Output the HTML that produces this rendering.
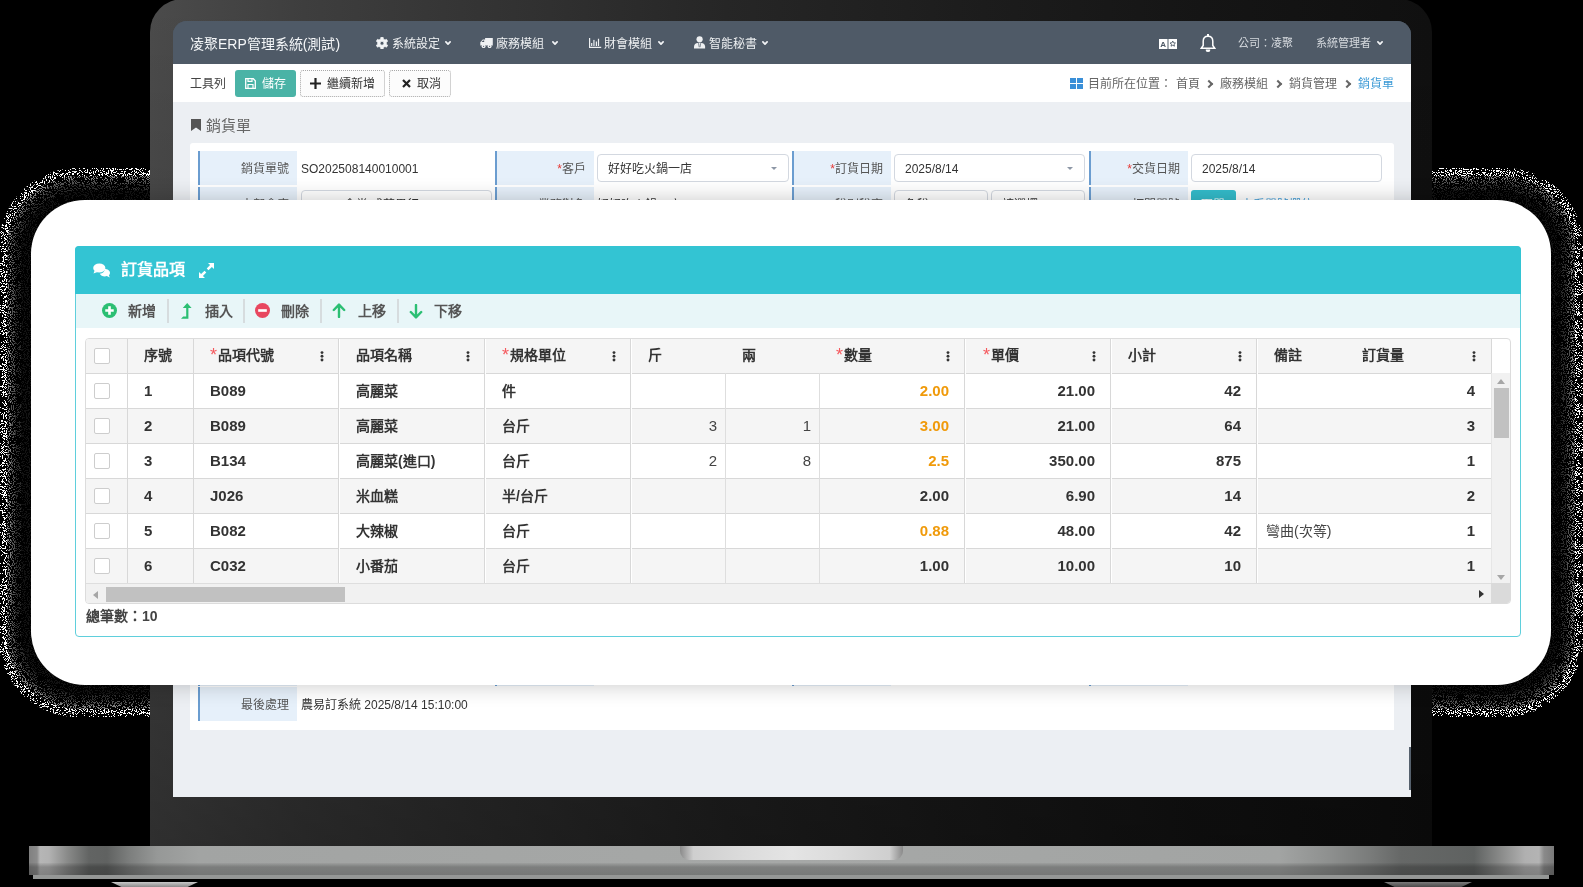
<!DOCTYPE html>
<html lang="zh-TW">
<head>
<meta charset="utf-8">
<style>
*{box-sizing:border-box;margin:0;padding:0}
html,body{width:1583px;height:887px;overflow:hidden;background:#000}
body{position:relative;font-family:"Liberation Sans",sans-serif;color:#333}
.abs{position:absolute}
#bezel{position:absolute;left:150px;top:-1px;width:1282px;height:847px;border-radius:33px 33px 0 0;
  background:linear-gradient(180deg,rgba(0,0,0,0) 0%,rgba(0,0,0,.12) 40%,rgba(0,0,0,.38) 100%),linear-gradient(90deg,#4b4b4b 0%,#3e3e3e 12%,#333 27%,#262626 45%,#1c1c1c 65%,#151515 82%,#101010 100%)}
#base{position:absolute;left:29px;top:846px;width:1525px;height:29px;
  background:linear-gradient(90deg,#808080 0px,#8c8c8c 8px,#b6b6b6 11px,#b2b2b2 20px,#8a8b8a 38px,#626463 60px,#606261 78px,#7c7e7d 100px,#969897 128px,#a2a4a3 170px,#a6a8a7 760px,#a2a4a3 1250px,#8e908f 1300px,#7a7c7b 1340px,#666867 1372px,#5f6261 1445px,#8a8b8a 1472px,#b0b0b0 1496px,#b4b4b4 1510px,#8a8a8a 1515px,#7a7a7a 1525px)}
#base .band{position:absolute;left:0;right:0;top:17px;height:12px;background:linear-gradient(180deg,rgba(0,0,0,.04) 0,rgba(0,0,0,.24) 4px,rgba(0,0,0,.28) 100%)}
#strip{position:absolute;left:33px;top:875px;width:1516px;height:4px;background:#959796}
#notch{position:absolute;left:680px;top:846px;width:223px;height:14px;border-radius:0 0 9px 9px;
  background:linear-gradient(90deg,#8a8a8a 0,#cfcfcf 6%,#dcdcdc 30%,#e4e4e4 50%,#dcdcdc 70%,#cfcfcf 94%,#8a8a8a 100%)}
.foot{position:absolute;top:882px;height:5px;background:linear-gradient(180deg,#c9c9c9,#8a8a8a);clip-path:polygon(0 0,100% 0,88% 100%,12% 100%)}
#screen{position:absolute;left:173px;top:21px;width:1238px;height:776px;border-radius:14px 14px 0 0;overflow:hidden;background:linear-gradient(#4f5a67 0,#4f5a67 43px,#eceff3 43px);will-change:transform}
#nav{position:absolute;left:0;top:0;width:100%;height:43px;background:#4e5966;color:#fff}
#tool{position:absolute;left:0;top:43px;width:100%;height:38px;background:#fff}
#card{position:absolute;left:31px;top:200px;width:1520px;height:485px;border-radius:54px;background:#fff;box-shadow:0 0 22px rgba(0,0,0,.22);will-change:transform}

.t{position:absolute;white-space:nowrap;line-height:1}
.nv{top:38px;font-size:12px;color:#eef0f2}
.nv2{top:38px;font-size:11px;color:#d5d9de}
.chev{position:absolute;top:39px;width:4.5px;height:4.5px;border-right:1.9px solid #f2f4f6;border-bottom:1.9px solid #f2f4f6;transform:rotate(45deg)}
.bc{top:78px;font-size:12px;color:#666}
.bchev{position:absolute;top:81px;width:6px;height:6px;border-right:2px solid #666;border-top:2px solid #666;transform:rotate(45deg)}

.lb{position:absolute;width:99px;background:#e6f0fa;border-left:2px solid #6b9dd0}
.lt{font-size:12px;color:#555}
.vt{font-size:12px;color:#333}
.ib{position:absolute;border:1px solid #d3d8e0;border-radius:4px;background:#fff}
.caret{position:absolute;width:0;height:0;border-left:3px solid transparent;border-right:3px solid transparent;border-top:3.5px solid #8d97a6}

.tb{top:304px;font-size:14px;font-weight:bold;color:#555}
.sep{position:absolute;top:299px;width:1.5px;height:24px;background:#d6dcde}
.tt{font-size:14px;font-weight:bold;color:#333}
.td{font-size:15px;font-weight:bold;color:#333}
.tn{font-size:15px;color:#444}
.tnc{font-size:14px;color:#444}
.req{color:#f55a5f;font-weight:normal;margin-right:0.5px;font-size:18px;line-height:0;position:relative;top:1px}
.cb{position:absolute;width:16px;height:16px;border:1px solid #cdcdcd;border-radius:2px;background:#fff}
.kb{position:absolute;width:4px;height:11px;background:radial-gradient(circle at 2px 1.7px,#333 1.45px,transparent 1.75px) 0 0/4px 3.7px repeat-y}
.tri-up{width:0;height:0;border-left:4.5px solid transparent;border-right:4.5px solid transparent;border-bottom:5px solid #a6a6a6}
.tri-dn{width:0;height:0;border-left:4.5px solid transparent;border-right:4.5px solid transparent;border-top:5px solid #a6a6a6}
.tri-l{width:0;height:0;border-top:4px solid transparent;border-bottom:4px solid transparent;border-right:5px solid #a6a6a6}
.tri-r{width:0;height:0;border-top:4.5px solid transparent;border-bottom:4.5px solid transparent;border-left:5px solid #333}
</style>
</head>
<body>
<svg class="abs" style="left:0;top:0" width="1583" height="887"><defs><filter id="n0" x="0" y="0" width="1583" height="887" filterUnits="userSpaceOnUse"><feTurbulence type="fractalNoise" baseFrequency="0.95" numOctaves="2" seed="5" result="t"/><feColorMatrix in="t" type="matrix" values="0 0 0 0 1 0 0 0 0 1 0 0 0 0 1 1 0 0 0 0" result="a"/><feComponentTransfer in="a" result="b"><feFuncA type="discrete" tableValues="0 0 0 0 0 0 0 0 0 0 0 0 1 1 1 1 1 1 1 1"/></feComponentTransfer><feComposite in="b" in2="SourceGraphic" operator="in"/></filter><filter id="n1" x="0" y="0" width="1583" height="887" filterUnits="userSpaceOnUse"><feTurbulence type="fractalNoise" baseFrequency="0.95" numOctaves="2" seed="3" result="t"/><feColorMatrix in="t" type="matrix" values="0 0 0 0 1 0 0 0 0 1 0 0 0 0 1 1 0 0 0 0" result="a"/><feComponentTransfer in="a" result="b"><feFuncA type="discrete" tableValues="0 0 0 0 0 0 0 0 0 0 0 1 1 1 1 1 1 1 1 1"/></feComponentTransfer><feComposite in="b" in2="SourceGraphic" operator="in"/></filter><filter id="n2" x="0" y="0" width="1583" height="887" filterUnits="userSpaceOnUse"><feTurbulence type="fractalNoise" baseFrequency="0.95" numOctaves="2" seed="7" result="t"/><feColorMatrix in="t" type="matrix" values="0 0 0 0 1 0 0 0 0 1 0 0 0 0 1 1 0 0 0 0" result="a"/><feComponentTransfer in="a" result="b"><feFuncA type="discrete" tableValues="0 0 0 0 0 0 0 0 0 0 0 1 1 1 1 1 1 1 1 1"/></feComponentTransfer><feComposite in="b" in2="SourceGraphic" operator="in"/></filter><filter id="n3" x="0" y="0" width="1583" height="887" filterUnits="userSpaceOnUse"><feTurbulence type="fractalNoise" baseFrequency="0.95" numOctaves="2" seed="9" result="t"/><feColorMatrix in="t" type="matrix" values="0 0 0 0 1 0 0 0 0 1 0 0 0 0 1 1 0 0 0 0" result="a"/><feComponentTransfer in="a" result="b"><feFuncA type="discrete" tableValues="0 0 0 0 0 0 0 0 0 0 0 1 1 1 1 1 1 1 1 1"/></feComponentTransfer><feComposite in="b" in2="SourceGraphic" operator="in"/></filter><filter id="n4" x="0" y="0" width="1583" height="887" filterUnits="userSpaceOnUse"><feTurbulence type="fractalNoise" baseFrequency="0.95" numOctaves="2" seed="11" result="t"/><feColorMatrix in="t" type="matrix" values="0 0 0 0 1 0 0 0 0 1 0 0 0 0 1 1 0 0 0 0" result="a"/><feComponentTransfer in="a" result="b"><feFuncA type="discrete" tableValues="0 0 0 0 0 0 0 0 0 0 0 1 1 1 1 1 1 1 1 1"/></feComponentTransfer><feComposite in="b" in2="SourceGraphic" operator="in"/></filter><filter id="n5" x="0" y="0" width="1583" height="887" filterUnits="userSpaceOnUse"><feTurbulence type="fractalNoise" baseFrequency="0.95" numOctaves="2" seed="13" result="t"/><feColorMatrix in="t" type="matrix" values="0 0 0 0 1 0 0 0 0 1 0 0 0 0 1 1 0 0 0 0" result="a"/><feComponentTransfer in="a" result="b"><feFuncA type="discrete" tableValues="0 0 0 0 0 0 0 0 0 0 0 1 1 1 1 1 1 1 1 1"/></feComponentTransfer><feComposite in="b" in2="SourceGraphic" operator="in"/></filter></defs><path d="M77.0,168H1505.0A78.0,78.0 0 0 1 1583,246.0V639.0A78.0,78.0 0 0 1 1505.0,717H77.0A78.0,78.0 0 0 1 -1,639.0V246.0A78.0,78.0 0 0 1 77.0,168ZM77.75,171H1504.25A75.75,75.75 0 0 1 1580,246.75V638.25A75.75,75.75 0 0 1 1504.25,714H77.75A75.75,75.75 0 0 1 2,638.25V246.75A75.75,75.75 0 0 1 77.75,171Z" fill-rule="evenodd" fill="#fff" fill-opacity="1.0" filter="url(#n0)"/><path d="M77.75,171H1504.25A75.75,75.75 0 0 1 1580,246.75V638.25A75.75,75.75 0 0 1 1504.25,714H77.75A75.75,75.75 0 0 1 2,638.25V246.75A75.75,75.75 0 0 1 77.75,171ZM79.0,176H1503.0A72.0,72.0 0 0 1 1575,248.0V637.0A72.0,72.0 0 0 1 1503.0,709H79.0A72.0,72.0 0 0 1 7,637.0V248.0A72.0,72.0 0 0 1 79.0,176Z" fill-rule="evenodd" fill="#fff" fill-opacity="1.0" filter="url(#n1)"/><path d="M79.0,176H1503.0A72.0,72.0 0 0 1 1575,248.0V637.0A72.0,72.0 0 0 1 1503.0,709H79.0A72.0,72.0 0 0 1 7,637.0V248.0A72.0,72.0 0 0 1 79.0,176ZM80.0,180H1502.0A69.0,69.0 0 0 1 1571,249.0V636.0A69.0,69.0 0 0 1 1502.0,705H80.0A69.0,69.0 0 0 1 11,636.0V249.0A69.0,69.0 0 0 1 80.0,180Z" fill-rule="evenodd" fill="#fff" fill-opacity="0.5" filter="url(#n2)"/><path d="M80.0,180H1502.0A69.0,69.0 0 0 1 1571,249.0V636.0A69.0,69.0 0 0 1 1502.0,705H80.0A69.0,69.0 0 0 1 11,636.0V249.0A69.0,69.0 0 0 1 80.0,180ZM81.0,184H1501.0A66.0,66.0 0 0 1 1567,250.0V635.0A66.0,66.0 0 0 1 1501.0,701H81.0A66.0,66.0 0 0 1 15,635.0V250.0A66.0,66.0 0 0 1 81.0,184Z" fill-rule="evenodd" fill="#fff" fill-opacity="0.32" filter="url(#n3)"/><path d="M81.0,184H1501.0A66.0,66.0 0 0 1 1567,250.0V635.0A66.0,66.0 0 0 1 1501.0,701H81.0A66.0,66.0 0 0 1 15,635.0V250.0A66.0,66.0 0 0 1 81.0,184ZM82.5,190H1499.5A61.5,61.5 0 0 1 1561,251.5V633.5A61.5,61.5 0 0 1 1499.5,695H82.5A61.5,61.5 0 0 1 21,633.5V251.5A61.5,61.5 0 0 1 82.5,190Z" fill-rule="evenodd" fill="#fff" fill-opacity="0.18" filter="url(#n4)"/><path d="M82.5,190H1499.5A61.5,61.5 0 0 1 1561,251.5V633.5A61.5,61.5 0 0 1 1499.5,695H82.5A61.5,61.5 0 0 1 21,633.5V251.5A61.5,61.5 0 0 1 82.5,190ZM85.0,200H1497.0A54.0,54.0 0 0 1 1551,254.0V631.0A54.0,54.0 0 0 1 1497.0,685H85.0A54.0,54.0 0 0 1 31,631.0V254.0A54.0,54.0 0 0 1 85.0,200Z" fill-rule="evenodd" fill="#fff" fill-opacity="0.08" filter="url(#n5)"/></svg>
<div id="bezel"></div>
<div id="base"><div class="band"></div></div>
<div id="strip"></div>
<div id="notch"></div>
<div class="foot" style="left:111px;width:87px"></div>
<div class="foot" style="left:1384px;width:88px;background:linear-gradient(180deg,#7a7a7a,#4a4a4a)"></div>
<div id="screen">
 <div style="position:absolute;left:-173px;top:-21px;width:1583px;height:887px">
  <div class="abs" style="left:173px;top:21px;width:1238px;height:43px;background:#4f5a67"></div>
  <div class="abs" style="left:173px;top:64px;width:1238px;height:38px;background:#fff"></div>
  <!-- nav -->
  <div class="t" style="left:190px;top:37px;font-size:14px;color:#f4f6f8">凌聚ERP管理系統(測試)</div>
  <svg class="abs" style="left:375.5px;top:36.5px" width="12" height="12.5" viewBox="0 0 16 16"><path fill="#f2f4f6" fill-rule="evenodd" stroke="#f2f4f6" stroke-width="1" stroke-linejoin="round" d="M6.28,2.36 L6.47,0.15 L9.53,0.15 L9.72,2.36 L12.02,3.69 L14.04,2.75 L15.56,5.40 L13.75,6.67 L13.75,9.33 L15.56,10.60 L14.04,13.25 L12.02,12.31 L9.72,13.64 L9.53,15.85 L6.47,15.85 L6.28,13.64 L3.98,12.31 L1.96,13.25 L0.44,10.60 L2.25,9.33 L2.25,6.67 L0.44,5.40 L1.96,2.75 L3.98,3.69Z M8,5.4 A2.6,2.6 0 1 0 8,10.6 A2.6,2.6 0 1 0 8,5.4Z"/></svg>
  <div class="t nv" style="left:392px">系統設定</div>
  <svg class="abs" style="left:444.5px;top:40.5px" width="6" height="4.5" viewBox="0 0 6 4.5"><path d="M.9 .9L3 3.1 5.1 .9" fill="none" stroke="#f2f4f6" stroke-width="1.7" stroke-linecap="round" stroke-linejoin="round"/></svg>
  <svg class="abs" style="left:480px;top:37.5px" width="13" height="10.5" viewBox="0 0 13 10.5"><path fill="#f0f2f4" fill-rule="evenodd" d="M5.1 0H12.8V7.6H5.1zM0.3 4.3L2.8 1.6H5.1V7.6H0.3zM1.5 4.1L3.1 2.5H4.2V4.1z"/><circle cx="3.6" cy="8.3" r="1.9" fill="#f0f2f4"/><circle cx="9.6" cy="8.3" r="1.9" fill="#f0f2f4"/><circle cx="3.6" cy="8.3" r=".65" fill="#4f5a67"/><circle cx="9.6" cy="8.3" r=".65" fill="#4f5a67"/></svg>
  <div class="t nv" style="left:496px">廠務模組</div>
  <svg class="abs" style="left:551.5px;top:40.5px" width="6" height="4.5" viewBox="0 0 6 4.5"><path d="M.9 .9L3 3.1 5.1 .9" fill="none" stroke="#f2f4f6" stroke-width="1.7" stroke-linecap="round" stroke-linejoin="round"/></svg>
  <svg class="abs" style="left:589px;top:38px" width="13" height="10" viewBox="0 0 13 10"><path fill="#eef0f2" d="M0 0h1.2v8.8H12.2V10H0zM2.1 4.9h1.2V8H2.1zM6.8 3.4H8V8H6.8zM8.9 0.7h1.2V8H8.9z"/><rect x="4" y="1.9" width="1.8" height="6.1" fill="#b9bfc6"/></svg>
  <div class="t nv" style="left:604px">財會模組</div>
  <svg class="abs" style="left:657.5px;top:40.5px" width="6" height="4.5" viewBox="0 0 6 4.5"><path d="M.9 .9L3 3.1 5.1 .9" fill="none" stroke="#f2f4f6" stroke-width="1.7" stroke-linecap="round" stroke-linejoin="round"/></svg>
  <svg class="abs" style="left:694px;top:36px" width="12" height="13" viewBox="0 0 12 13"><circle cx="5.6" cy="3.3" r="3.1" fill="#eef0f2"/><path fill="#eef0f2" d="M0 12.6V10.6C0 8.5 1.6 7.2 3.8 7H7.4C9.6 7.2 11.1 8.5 11.1 10.6V12.6z"/><path fill="none" stroke="#4f5a67" stroke-width=".7" d="M4.5 7.1L5.2 11.2M6.7 7.1L6 11.2"/></svg>
  <div class="t nv" style="left:709px">智能秘書</div>
  <svg class="abs" style="left:761.5px;top:40.5px" width="6" height="4.5" viewBox="0 0 6 4.5"><path d="M.9 .9L3 3.1 5.1 .9" fill="none" stroke="#f2f4f6" stroke-width="1.7" stroke-linecap="round" stroke-linejoin="round"/></svg>
  <svg class="abs" style="left:1159px;top:39px" width="18" height="10" viewBox="0 0 18 10"><rect x="0" y="0" width="8.5" height="10" fill="#fff"/><rect x="9.5" y="0" width="8.5" height="10" fill="#fff"/><text x="4.25" y="8.3" font-size="8" font-weight="bold" text-anchor="middle" fill="#4e5966" font-family="Liberation Sans">A</text><path d="M13.75 2l.8 1.8 1.9.2-1.4 1.3.4 1.9-1.7-1-1.7 1 .4-1.9-1.4-1.3 1.9-.2z" fill="none" stroke="#4e5966" stroke-width=".9"/></svg>
  <svg class="abs" style="left:1200px;top:34px" width="16" height="19" viewBox="0 0 16 19"><path fill="none" stroke="#fff" stroke-width="1.5" d="M8 2.2c-3 0-4.8 2.2-4.8 5v4.3L1.2 14.3h13.6l-2-2.8V7.2c0-2.8-1.8-5-4.8-5z"/><path fill="#fff" d="M7 0h2v2.5H7zM5.8 15.5h4.4A2.2 2.2 0 018 18a2.2 2.2 0 01-2.2-2.5z"/></svg>
  <div class="t nv2" style="left:1238px">公司：凌聚</div>
  <div class="t nv2" style="left:1316px">系統管理者</div>
  <svg class="abs" style="left:1376.5px;top:40.5px" width="6" height="4.5" viewBox="0 0 6 4.5"><path d="M.9 .9L3 3.1 5.1 .9" fill="none" stroke="#f2f4f6" stroke-width="1.7" stroke-linecap="round" stroke-linejoin="round"/></svg>
  <!-- toolbar -->
  <div class="t" style="left:190px;top:78px;font-size:12px;color:#444">工具列</div>
  <div class="abs" style="left:235px;top:70px;width:61px;height:27px;background:#4ab3a6;border-radius:3px"></div>
  <svg class="abs" style="left:245px;top:78px" width="11" height="11" viewBox="0 0 11 11"><path fill="none" stroke="#fff" stroke-width="1.3" d="M.7.7h7.6l2 2v7.6H.7z"/><path fill="none" stroke="#fff" stroke-width="1.2" d="M3 .7v2.6h4V.7M3 10.3V6.5h5v3.8"/></svg>
  <div class="t" style="left:262px;top:78px;font-size:12px;color:#fff">儲存</div>
  <div class="abs" style="left:300px;top:70px;width:85px;height:27px;border:1px dotted #a8a8a8;border-radius:3px;background:#fcfcfc"></div>
  <svg class="abs" style="left:310px;top:78px" width="11" height="11" viewBox="0 0 11 11"><path fill="#222" d="M4.4 0h2.2v4.4H11v2.2H6.6V11H4.4V6.6H0V4.4h4.4z"/></svg>
  <div class="t" style="left:327px;top:78px;font-size:12px;color:#333">繼續新增</div>
  <div class="abs" style="left:389px;top:70px;width:62px;height:27px;border:1px dotted #a8a8a8;border-radius:3px;background:#fcfcfc"></div>
  <svg class="abs" style="left:402px;top:79px" width="9" height="9" viewBox="0 0 9 9"><path stroke="#222" stroke-width="2.2" d="M1 1l7 7M8 1L1 8"/></svg>
  <div class="t" style="left:417px;top:78px;font-size:12px;color:#333">取消</div>
  <svg class="abs" style="left:1070px;top:78px" width="13" height="11" viewBox="0 0 13 11"><path fill="#3a8fd8" d="M0 0h6v5H0zm7 0h6v5H7zM0 6h6v5H0zm7 0h6v5H7z"/></svg>
  <div class="t bc" style="left:1088px">目前所在位置：</div>
  <div class="t bc" style="left:1176px">首頁</div>
  <div class="bchev" style="left:1206px"></div>
  <div class="t bc" style="left:1220px">廠務模組</div>
  <div class="bchev" style="left:1275px"></div>
  <div class="t bc" style="left:1289px">銷貨管理</div>
  <div class="bchev" style="left:1344px"></div>
  <div class="t bc" style="left:1358px;color:#3c9ad6">銷貨單</div>
  <!-- title -->
  <svg class="abs" style="left:191px;top:119px" width="10" height="12" viewBox="0 0 10 12"><path fill="#555" d="M0 0h10v12L5 8.5 0 12z"/></svg>
  <div class="t" style="left:206px;top:118px;font-size:15px;color:#666">銷貨單</div>
  <!-- form card -->
  <div class="abs" style="left:190px;top:143px;width:1204px;height:587px;background:#fff;border-radius:3px 3px 0 0"></div>
  <div class="lb" style="left:198px;top:151px;height:34px"></div><div class="t lt" style="right:1294px;top:163px">銷貨單號</div><div class="t vt" style="left:301px;top:163px">SO202508140010001</div><div class="lb" style="left:495px;top:151px;height:34px"></div><div class="t lt" style="right:997px;top:163px"><span style="color:#e53935">*</span>客戶</div><div class="ib" style="left:597px;top:154px;width:192px;height:28px"></div><div class="t vt" style="left:608px;top:163px">好好吃火鍋一店</div><div class="caret" style="left:771px;top:167px"></div><div class="lb" style="left:792px;top:151px;height:34px"></div><div class="t lt" style="right:700px;top:163px"><span style="color:#e53935">*</span>訂貨日期</div><div class="ib" style="left:894px;top:154px;width:191px;height:28px"></div><div class="t vt" style="left:905px;top:163px">2025/8/14</div><div class="caret" style="left:1067px;top:167px"></div><div class="lb" style="left:1089px;top:151px;height:34px"></div><div class="t lt" style="right:403px;top:163px"><span style="color:#e53935">*</span>交貨日期</div><div class="ib" style="left:1191px;top:154px;width:191px;height:28px"></div><div class="t vt" style="left:1202px;top:163px">2025/8/14</div><div class="lb" style="left:198px;top:187px;height:34px"></div><div class="t lt" style="right:1294px;top:199px">本部倉庫</div><div class="ib" style="left:301px;top:190px;width:191px;height:28px"></div><div class="t vt" style="left:312px;top:199px">C01 / 食堂 成華果行</div><div class="lb" style="left:495px;top:187px;height:34px"></div><div class="t lt" style="right:997px;top:199px">業務對象</div><div class="t vt" style="left:597px;top:199px">好好吃火鍋一店</div><div class="lb" style="left:792px;top:187px;height:34px"></div><div class="t lt" style="right:700px;top:199px"><span style="color:#e53935">*</span>稅別稅率</div><div class="ib" style="left:894px;top:190px;width:94px;height:28px"></div><div class="t vt" style="left:905px;top:199px">免稅</div><div class="ib" style="left:991px;top:190px;width:94px;height:28px"></div><div class="t vt" style="left:1002px;top:199px">請選擇</div><div class="lb" style="left:1089px;top:187px;height:34px"></div><div class="t lt" style="right:403px;top:199px">打開單號</div><div class="abs" style="left:1191px;top:190px;width:45px;height:28px;background:#33bccb;border-radius:3px"></div><div class="t" style="left:1201px;top:199px;font-size:12px;color:#fff">取單</div><div class="t" style="left:1241px;top:199px;font-size:12px;color:#3c9ad6">查看單號欄位</div><div class="lb" style="left:495px;top:650px;height:36px"></div><div class="lb" style="left:792px;top:650px;height:36px"></div><div class="lb" style="left:1089px;top:650px;height:36px"></div><div class="lb" style="left:198px;top:650px;height:36px"></div><div class="lb" style="left:198px;top:687px;height:34px"></div><div class="t lt" style="right:1294px;top:699px">最後處理</div><div class="t vt" style="left:301px;top:699px">農易訂系統 2025/8/14 15:10:00</div><div class="abs" style="left:1409px;top:747px;width:2px;height:43px;background:#56616d"></div>
 </div>
</div>
<div id="card"><div style="position:absolute;left:-31px;top:-200px;width:1583px;height:887px">
<div class="abs" style="left:75px;top:246px;width:1446px;height:391px;border:1px solid #5fcfdc;border-radius:4px;background:#fff"></div>
<div class="abs" style="left:75px;top:246px;width:1446px;height:48px;background:#33c4d3;border-radius:4px 4px 0 0"></div>
<div class="abs" style="left:76px;top:294px;width:1444px;height:34px;background:#e8f6f8"></div>
<svg class="abs" style="left:93px;top:263px" width="18" height="15" viewBox="0 0 18 15"><path fill="#fff" d="M11.6 5.8c2.9.3 5.4 1.9 5.4 4.1 0 .9-.4 1.7-1.1 2.3l.9 2.3-3-1.4c-.6.2-1.3.3-2 .3-2.3 0-4.3-1-5-2.6 2.9-.3 5-2.2 4.8-5z"/><ellipse cx="6.3" cy="5" rx="6.1" ry="4.6" fill="#fff"/><path fill="#fff" d="M1.6 7.6L.5 10.6 4.4 9.1z"/></svg>
<div class="t" style="left:121px;top:262px;font-size:16px;font-weight:bold;color:#fff">訂貨品項</div>
<svg class="abs" style="left:199px;top:263px" width="15" height="15" viewBox="0 0 15 15"><path fill="#fff" d="M9 0h6v6l-2.1-2.1-3.4 3.4-1.8-1.8 3.4-3.4zM6 15H0V9l2.1 2.1 3.4-3.4 1.8 1.8-3.4 3.4z"/></svg>
<svg class="abs" style="left:102px;top:303px" width="15" height="15" viewBox="0 0 16 16"><circle cx="8" cy="8" r="8" fill="#2bbf73"/><path d="M6.6 3.5h2.8v3.1h3.1v2.8H9.4v3.1H6.6V9.4H3.5V6.6h3.1z" fill="#fff"/></svg>
<div class="t tb" style="left:128px">新增</div>
<div class="sep" style="left:167px"></div>
<svg class="abs" style="left:180px;top:302px" width="12" height="17" viewBox="0 0 12 17"><path fill="#2bbf73" d="M7.2 1L11.6 6H8.4v10.8H1l2.2-2.4h3V6H2.8z"/></svg>
<div class="t tb" style="left:205px">插入</div>
<div class="sep" style="left:243px"></div>
<svg class="abs" style="left:255px;top:303px" width="15" height="15" viewBox="0 0 16 16"><circle cx="8" cy="8" r="8" fill="#e8475f"/><rect x="3.4" y="6.6" width="9.2" height="2.8" fill="#fff"/></svg>
<div class="t tb" style="left:281px">刪除</div>
<div class="sep" style="left:320px"></div>
<svg class="abs" style="left:332px;top:303px" width="14" height="15" viewBox="0 0 14 15"><path fill="none" stroke="#2bbf73" stroke-width="2.4" stroke-linecap="round" stroke-linejoin="round" d="M7 14V2M1.8 7L7 1.6 12.2 7"/></svg>
<div class="t tb" style="left:358px">上移</div>
<div class="sep" style="left:397px"></div>
<svg class="abs" style="left:409px;top:304px" width="14" height="15" viewBox="0 0 14 15"><path fill="none" stroke="#2bbf73" stroke-width="2.4" stroke-linecap="round" stroke-linejoin="round" d="M7 1v12M1.8 8L7 13.4 12.2 8"/></svg>
<div class="t tb" style="left:434px">下移</div>
<div class="abs" style="left:85px;top:338px;width:1426px;height:266px;border:1px solid #dcdcdc;border-radius:4px;background:#fff;overflow:hidden"><div class="abs" style="left:0;top:0;width:1405px;height:34px;background:#f5f5f5"></div>
<div class="abs" style="left:0;top:34px;width:1405px;height:35px;background:#fff;border-top:1px solid #d8d8d8"></div>
<div class="abs" style="left:0;top:69px;width:1405px;height:35px;background:#f5f5f5;border-top:1px solid #d8d8d8"></div>
<div class="abs" style="left:0;top:104px;width:1405px;height:35px;background:#fff;border-top:1px solid #d8d8d8"></div>
<div class="abs" style="left:0;top:139px;width:1405px;height:35px;background:#f5f5f5;border-top:1px solid #d8d8d8"></div>
<div class="abs" style="left:0;top:174px;width:1405px;height:35px;background:#fff;border-top:1px solid #d8d8d8"></div>
<div class="abs" style="left:0;top:209px;width:1405px;height:35px;background:#f5f5f5;border-top:1px solid #d8d8d8"></div>
<div class="abs" style="left:0;top:244px;width:1405px;height:1px;background:#dedede"></div>
<div class="abs" style="left:41px;top:0;width:1px;height:244px;background:#d8d8d8"></div>
<div class="abs" style="left:107px;top:0;width:1px;height:244px;background:#d8d8d8"></div>
<div class="abs" style="left:252px;top:0;width:1px;height:244px;background:#d8d8d8"></div><div class="abs" style="left:253px;top:0;width:1px;height:244px;background:#fff"></div>
<div class="abs" style="left:398px;top:0;width:1px;height:244px;background:#d8d8d8"></div><div class="abs" style="left:399px;top:0;width:1px;height:244px;background:#fff"></div>
<div class="abs" style="left:544px;top:0;width:1px;height:244px;background:#d8d8d8"></div><div class="abs" style="left:545px;top:0;width:1px;height:244px;background:#fff"></div>
<div class="abs" style="left:878px;top:0;width:1px;height:244px;background:#d8d8d8"></div><div class="abs" style="left:879px;top:0;width:1px;height:244px;background:#fff"></div>
<div class="abs" style="left:1024px;top:0;width:1px;height:244px;background:#d8d8d8"></div><div class="abs" style="left:1025px;top:0;width:1px;height:244px;background:#fff"></div>
<div class="abs" style="left:1170px;top:0;width:1px;height:244px;background:#d8d8d8"></div><div class="abs" style="left:1171px;top:0;width:1px;height:244px;background:#fff"></div>
<div class="abs" style="left:1405px;top:0;width:1px;height:244px;background:#d8d8d8"></div>
<div class="abs" style="left:639px;top:34px;width:1px;height:210px;background:#dedede"></div>
<div class="abs" style="left:733px;top:34px;width:1px;height:210px;background:#dedede"></div>
<div class="cb" style="left:8px;top:9px"></div>
<div class="t tt" style="top:9px;left:58px;">序號</div>
<div class="t tt" style="top:9px;left:124px;"><span class="req">*</span>品項代號</div>
<div class="t tt" style="top:9px;left:270px;">品項名稱</div>
<div class="t tt" style="top:9px;left:416px;"><span class="req">*</span>規格單位</div>
<div class="t tt" style="top:9px;left:562px;">斤</div>
<div class="t tt" style="top:9px;left:656px;">兩</div>
<div class="t tt" style="top:9px;left:750px;"><span class="req">*</span>數量</div>
<div class="t tt" style="top:9px;left:897px;"><span class="req">*</span>單價</div>
<div class="t tt" style="top:9px;left:1042px;">小計</div>
<div class="t tt" style="top:9px;left:1188px;">備註</div>
<div class="t tt" style="top:9px;left:1276px;">訂貨量</div>
<svg class="abs" style="left:233.5px;top:12px" width="4" height="11" viewBox="0 0 4 11"><circle cx="2" cy="1.6" r="1.45" fill="#333"/><circle cx="2" cy="5.3" r="1.45" fill="#333"/><circle cx="2" cy="9" r="1.45" fill="#333"/></svg>
<svg class="abs" style="left:379.5px;top:12px" width="4" height="11" viewBox="0 0 4 11"><circle cx="2" cy="1.6" r="1.45" fill="#333"/><circle cx="2" cy="5.3" r="1.45" fill="#333"/><circle cx="2" cy="9" r="1.45" fill="#333"/></svg>
<svg class="abs" style="left:525.5px;top:12px" width="4" height="11" viewBox="0 0 4 11"><circle cx="2" cy="1.6" r="1.45" fill="#333"/><circle cx="2" cy="5.3" r="1.45" fill="#333"/><circle cx="2" cy="9" r="1.45" fill="#333"/></svg>
<svg class="abs" style="left:859.5px;top:12px" width="4" height="11" viewBox="0 0 4 11"><circle cx="2" cy="1.6" r="1.45" fill="#333"/><circle cx="2" cy="5.3" r="1.45" fill="#333"/><circle cx="2" cy="9" r="1.45" fill="#333"/></svg>
<svg class="abs" style="left:1005.5px;top:12px" width="4" height="11" viewBox="0 0 4 11"><circle cx="2" cy="1.6" r="1.45" fill="#333"/><circle cx="2" cy="5.3" r="1.45" fill="#333"/><circle cx="2" cy="9" r="1.45" fill="#333"/></svg>
<svg class="abs" style="left:1151.5px;top:12px" width="4" height="11" viewBox="0 0 4 11"><circle cx="2" cy="1.6" r="1.45" fill="#333"/><circle cx="2" cy="5.3" r="1.45" fill="#333"/><circle cx="2" cy="9" r="1.45" fill="#333"/></svg>
<svg class="abs" style="left:1385.5px;top:12px" width="4" height="11" viewBox="0 0 4 11"><circle cx="2" cy="1.6" r="1.45" fill="#333"/><circle cx="2" cy="5.3" r="1.45" fill="#333"/><circle cx="2" cy="9" r="1.45" fill="#333"/></svg>
<div class="cb" style="left:8px;top:44px"></div>
<div class="t td" style="top:44px;left:58px;">1</div>
<div class="t td" style="top:44px;left:124px;">B089</div>
<div class="t tt" style="top:45px;left:270px;">高麗菜</div>
<div class="t tt" style="top:45px;left:416px;">件</div>
<div class="t td" style="top:44px;right:561px;color:#f09a0a;">2.00</div>
<div class="t td" style="top:44px;right:415px;">21.00</div>
<div class="t td" style="top:44px;right:269px;">42</div>
<div class="t td" style="top:44px;right:35px;">4</div>
<div class="cb" style="left:8px;top:79px"></div>
<div class="t td" style="top:79px;left:58px;">2</div>
<div class="t td" style="top:79px;left:124px;">B089</div>
<div class="t tt" style="top:80px;left:270px;">高麗菜</div>
<div class="t tt" style="top:80px;left:416px;">台斤</div>
<div class="t tn" style="top:79px;right:793px;">3</div>
<div class="t tn" style="top:79px;right:699px;">1</div>
<div class="t td" style="top:79px;right:561px;color:#f09a0a;">3.00</div>
<div class="t td" style="top:79px;right:415px;">21.00</div>
<div class="t td" style="top:79px;right:269px;">64</div>
<div class="t td" style="top:79px;right:35px;">3</div>
<div class="cb" style="left:8px;top:114px"></div>
<div class="t td" style="top:114px;left:58px;">3</div>
<div class="t td" style="top:114px;left:124px;">B134</div>
<div class="t tt" style="top:115px;left:270px;">高麗菜(進口)</div>
<div class="t tt" style="top:115px;left:416px;">台斤</div>
<div class="t tn" style="top:114px;right:793px;">2</div>
<div class="t tn" style="top:114px;right:699px;">8</div>
<div class="t td" style="top:114px;right:561px;color:#f09a0a;">2.5</div>
<div class="t td" style="top:114px;right:415px;">350.00</div>
<div class="t td" style="top:114px;right:269px;">875</div>
<div class="t td" style="top:114px;right:35px;">1</div>
<div class="cb" style="left:8px;top:149px"></div>
<div class="t td" style="top:149px;left:58px;">4</div>
<div class="t td" style="top:149px;left:124px;">J026</div>
<div class="t tt" style="top:150px;left:270px;">米血糕</div>
<div class="t tt" style="top:150px;left:416px;">半/台斤</div>
<div class="t td" style="top:149px;right:561px;">2.00</div>
<div class="t td" style="top:149px;right:415px;">6.90</div>
<div class="t td" style="top:149px;right:269px;">14</div>
<div class="t td" style="top:149px;right:35px;">2</div>
<div class="cb" style="left:8px;top:184px"></div>
<div class="t td" style="top:184px;left:58px;">5</div>
<div class="t td" style="top:184px;left:124px;">B082</div>
<div class="t tt" style="top:185px;left:270px;">大辣椒</div>
<div class="t tt" style="top:185px;left:416px;">台斤</div>
<div class="t td" style="top:184px;right:561px;color:#f09a0a;">0.88</div>
<div class="t td" style="top:184px;right:415px;">48.00</div>
<div class="t td" style="top:184px;right:269px;">42</div>
<div class="t tnc" style="top:185px;left:1180px;">彎曲(次等)</div>
<div class="t td" style="top:184px;right:35px;">1</div>
<div class="cb" style="left:8px;top:219px"></div>
<div class="t td" style="top:219px;left:58px;">6</div>
<div class="t td" style="top:219px;left:124px;">C032</div>
<div class="t tt" style="top:220px;left:270px;">小番茄</div>
<div class="t tt" style="top:220px;left:416px;">台斤</div>
<div class="t td" style="top:219px;right:561px;">1.00</div>
<div class="t td" style="top:219px;right:415px;">10.00</div>
<div class="t td" style="top:219px;right:269px;">10</div>
<div class="t td" style="top:219px;right:35px;">1</div>
<div class="abs" style="left:1405px;top:34px;width:19px;height:210px;background:#f1f1f1;border-left:1px solid #e6e6e6"></div>
<div class="abs" style="left:1408px;top:49px;width:15px;height:50px;background:#c1c1c1"></div>
<div class="abs tri-up" style="left:1411px;top:40px"></div>
<div class="abs tri-dn" style="left:1411px;top:236px"></div>
<div class="abs" style="left:0;top:244px;width:1405px;height:21px;background:#f1f1f1;border-top:1px solid #dedede"></div>
<div class="abs" style="left:1405px;top:244px;width:20px;height:21px;background:#dadada"></div>
<div class="abs" style="left:20px;top:248px;width:239px;height:15px;background:#c1c1c1"></div>
<div class="abs tri-l" style="left:7px;top:252px"></div>
<div class="abs tri-r" style="left:1393px;top:251px"></div></div>
<div class="t" style="left:86px;top:609px;font-size:14px;font-weight:bold;color:#444">總筆數：10</div>
</div></div>
</body>
</html>
